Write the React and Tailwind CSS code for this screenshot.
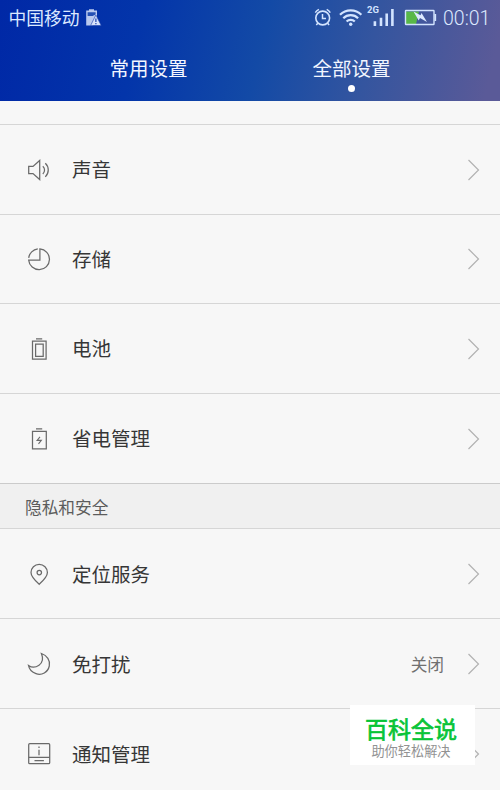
import React from "react";

function Icon({ children }) {
  return (
    <svg width="24" height="24" viewBox="0 0 24 24" fill="none" stroke="#6a6a6a" strokeWidth="1.25" className="ml-[27px] shrink-0">
      {children}
    </svg>
  );
}

const icons = {
  sound: (
    <Icon>
      <path d="M1.7 8.4h4.300l6.700-5.900v19l-6.700-5.900H1.700z" />
      <path d="M15.800 8.200a5.200 5.200 0 0 1 0 7.800M18.300 5.300a9.300 9.300 0 0 1 0 13.600" />
    </Icon>
  ),
  storage: (
    <Icon>
      <path d="M12.9 1.9a10.4 10.4 0 1 1-11.2 11.3H12.9z" />
      <path d="M1.7 10.9A10.4 10.4 0 0 1 10.8 1.9" />
    </Icon>
  ),
  battery: (
    <Icon>
      <path d="M9 1.800h6.200M5.500 4.200h13.600v17.800H5.500zM8.600 7h7.600v12.400H8.600z" />
    </Icon>
  ),
  power: (
    <Icon>
      <path d="M9 1.800h6.200M5.500 4.400h13.800v17.500H5.500z" />
      <path d="M13 9.800l-2.900 3.600h4.200l-2.800 3.400" strokeWidth="1.100" />
    </Icon>
  ),
  pin: (
    <Icon>
      <path d="M12.200 22.300C9 19.500 4 14.800 4 10.600a8.200 8.200 0 0 1 16.400 0c0 4.200-5 8.900-8.200 11.700z" />
      <circle cx="12.300" cy="10.600" r="2.200" />
    </Icon>
  ),
  moon: (
    <Icon>
      <path d="M14.400 1.500C20 3.400 23.500 8.600 22.300 14 20.900 20.300 14.800 23.700 9 21.700 4.800 20.200 2.200 17.200 1.500 13.400 4.400 15.500 8.600 15.600 12 13.200 15.600 10.600 16.300 6 14.400 1.500z" />
    </Icon>
  ),
  notice: (
    <Icon>
      <rect x="1.700" y="1.700" width="21" height="20" rx="1" />
      <path d="M1.700 15.400h21M7.500 18.600h9.400M12 7.700v5.500M12 4.600v1.400" />
    </Icon>
  ),
};

function Row({ icon, label, value, height = "h-[90px]", labelPad = "pb-px" }) {
  return (
    <div className={`${height} flex shrink-0 items-center border-t border-[#d6d6d6]`}>
      {icons[icon]}
      <span className={`ml-[21px] text-[19.500px] leading-[28px] text-[#363636] ${labelPad}`}>{label}</span>
      <span className="mr-[23px] ml-auto text-[16.700px] leading-6 text-[#707070]">{value}</span>
      <svg width="13" height="22" viewBox="0 0 13 22" fill="none" stroke="#b2b2b2" strokeWidth="1.200" className="mr-5 shrink-0">
        <path d="M1.500 1l10 10-10 10" />
      </svg>
    </div>
  );
}

function StatusBar() {
  return (
    <div className="flex h-[36px] items-center text-[#dce9ff]">
      <span className="ml-[8.500px] pb-[2px] text-[17.800px] leading-[26px]">中国移动</span>
      <svg width="17" height="18" viewBox="0 0 17 18" className="ml-[5px]">
        <path d="M4 1.500V.3h5v1.200h3V8L8 16.500H1.200v-15z" fill="#b9c9ee" />
        <path d="M2.600 3.200h8v2.300l-3 1.500h-5z" fill="#2450b4" />
        <path d="M10.900 6l5.300 10.500H5.600z" fill="#d7e2fb" stroke="#1c42ae" strokeWidth=".6" />
        <path d="M10.900 9.400v3.600M10.900 14v1.300" stroke="#1c42ae" strokeWidth="1.200" />
      </svg>
      <svg width="130" height="28" viewBox="310 4 130 28" fill="none" stroke="#d3e4ff" className="ml-auto shrink-0">
        <circle cx="322.700" cy="18" r="6.900" strokeWidth="1.600" />
        <path d="M322.500 14v4.500h3.500M315.300 12.700a9 9 0 0 1 3.600-3.300M326.700 9.400a9 9 0 0 1 3.600 3.300M317.800 23.200l-1.500 1.800M327.600 23.200l1.500 1.800" strokeWidth="1.500" />
        <path d="M340 14.800a15 15 0 0 1 21.400 0M343.300 18.300a10.300 10.300 0 0 1 14.800 0M346.600 21.500a5.800 5.800 0 0 1 8.200 0" strokeWidth="2.200" />
        <circle cx="350.700" cy="24.300" r="1.700" fill="#d3e4ff" stroke="none" />
        <text x="367" y="13.400" fill="#d3e4ff" stroke="none" fontFamily="Roboto, sans-serif" fontSize="9.500" fontWeight="700">2G</text>
        <path d="M374.900 26v-4.800M381 26v-8.200M386.700 26V13.500M392.400 26V9" strokeWidth="2.600" />
        <path d="M406 11.500h13l-3 12.500h-10z" fill="#58b848" stroke="none" />
        <rect x="405.500" y="10.500" width="28.500" height="14" rx=".5" strokeWidth="1.400" />
        <path d="M435.300 14v7" strokeWidth="1.700" />
        <path d="M413.500 11.500l7 3.700 1-2.200 5.500 9-7-4-1.300 2.500z" fill="#dce9ff" stroke="none" />
      </svg>
      <span className="mr-[8px] ml-[3px] w-[49px] pt-[2px] font-[Roboto] text-[19.500px] leading-6 font-light">00:01</span>
    </div>
  );
}

export default function App() {
  return (
    <div className="relative flex h-[790px] w-[500px] flex-col overflow-hidden bg-[#f7f7f7] font-['Noto_Sans_CJK_SC',sans-serif]">
      <header className="h-[101px] shrink-0 bg-[linear-gradient(103deg,#0028a6_0%,#0335aa_28%,#134aa6_52%,#34559f_73%,#5a5a98_97%)]">
        <StatusBar />
        <nav className="flex pt-[18px] text-[19.500px] leading-[28px] text-[#f2f6ff]">
          <div className="ml-[109.500px] w-[78px] whitespace-nowrap">常用设置</div>
          <div className="ml-[125px] flex w-[78px] flex-col items-center whitespace-nowrap">
            全部设置
            <span className="mt-[3px] size-[7px] rounded-full bg-white" />
          </div>
        </nav>
      </header>
      <div className="h-[23px] shrink-0" />
      <Row icon="sound" label="声音" />
      <Row icon="storage" label="存储" height="h-[89px]" />
      <Row icon="battery" label="电池" />
      <Row icon="power" label="省电管理" />
      <div className="flex h-[45px] shrink-0 items-center border-t border-[#cbcbcb] bg-[#f0f0f0] pt-px pl-[25px] text-[16.700px] leading-6 text-[#5c5c5c]">隐私和安全</div>
      <Row icon="pin" label="定位服务" labelPad="pb-0" />
      <Row icon="moon" label="免打扰" value="关闭" labelPad="pb-0" />
      <Row icon="notice" label="通知管理" labelPad="pb-0" />
      <div className="absolute top-[705px] left-[350px] flex h-[60px] w-[125px] flex-col items-center bg-white">
        <span className="mt-[12px] ml-[-3px] text-[23px] leading-[23px] text-[#08c437] [-webkit-text-stroke:0.700px_#08c437]">百科全说</span>
        <span className="mt-[4px] ml-[-3px] text-[13.200px] leading-[14px] text-[#929292]">助你轻松解决</span>
      </div>
    </div>
  );
}
